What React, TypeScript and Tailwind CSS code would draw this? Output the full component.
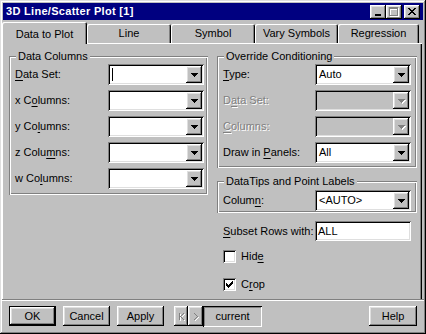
import React from "react";

const sunken =
  "shadow-[inset_1px_1px_0_#808080,inset_-1px_-1px_0_#fff,inset_2px_2px_0_#000,inset_-2px_-2px_0_#dfdfdf]";
const raised =
  "shadow-[inset_-1px_-1px_0_#000,inset_1px_1px_0_#fff,inset_-2px_-2px_0_#808080,inset_2px_2px_0_#dfdfdf]";
const etched =
  "shadow-[inset_1px_1px_0_#808080,inset_-1px_-1px_0_#fff,inset_2px_2px_0_#fff,inset_-2px_-2px_0_#808080]";
const defaultBtn =
  "shadow-[inset_0_0_0_1px_#000,inset_-2px_-2px_0_#000,inset_2px_2px_0_#fff,inset_-3px_-3px_0_#808080,inset_3px_3px_0_#dfdfdf]";
const disabledText = "text-[#808080] [text-shadow:1px_1px_0_#fff]";

function Pix({ rows, color }: { rows: string[]; color: string }) {
  const w = rows[0].length;
  const h = rows.length;
  const rects: React.ReactNode[] = [];
  rows.forEach((r, y) => {
    for (let x = 0; x < r.length; x++) {
      if (r[x] === "#") rects.push(<rect key={`${x}-${y}`} x={x} y={y} width={1} height={1} fill={color} />);
    }
  });
  return (
    <svg width={w} height={h} viewBox={`0 0 ${w} ${h}`} shapeRendering="crispEdges" className="block">
      {rects}
    </svg>
  );
}

function Glyph({ rows, disabled }: { rows: string[]; disabled?: boolean }) {
  if (!disabled) return <Pix rows={rows} color="#000" />;
  return (
    <div className="relative">
      <div className="absolute left-[1px] top-[1px]">
        <Pix rows={rows} color="#fff" />
      </div>
      <div className="relative">
        <Pix rows={rows} color="#808080" />
      </div>
    </div>
  );
}

const ARROW = ["#######", ".#####.", "..###..", "...#..."];
const CLOSE = ["##....##", ".##..##.", "..####..", "...##...", "..####..", ".##..##.", "##....##"];
const MIN = ["######", "######"];
const MAX = [
  "#########",
  "#########",
  "#.......#",
  "#.......#",
  "#.......#",
  "#.......#",
  "#.......#",
  "#.......#",
  "#########",
];
const CHECK = ["......#", ".....##", "#...###", "##.###.", "#####..", ".###...", "..#...."];
const FIRST = ["#...#", "#..#.", "#.#..", "##...", "#.#..", "#..#.", "#...#"];
const NEXT = ["#...", ".#..", "..#.", "...#", "..#.", ".#..", "#..."];

function L({ children }: { children: React.ReactNode }) {
  return <u className="underline decoration-1 underline-offset-[2px]">{children}</u>;
}

function Combo({ value, disabled, cursor }: { value?: string; disabled?: boolean; cursor?: boolean }) {
  return (
    <div className={`w-[96px] h-[21px] p-[2px] flex ${sunken} ${disabled ? "bg-[#c0c0c0]" : "bg-white"}`}>
      <div className="flex-1 flex items-center pl-[2px] leading-none">
        {cursor && <div className="w-px h-[13px] bg-black" />}
        {value}
      </div>
      <div className={`w-[16px] h-[17px] bg-[#c0c0c0] flex items-center justify-center ${raised}`}>
        <Glyph rows={ARROW} disabled={disabled} />
      </div>
    </div>
  );
}

function Row({
  label,
  disabled,
  value,
  cursor,
  comboDisabled,
}: {
  label: React.ReactNode;
  disabled?: boolean;
  value?: string;
  cursor?: boolean;
  comboDisabled?: boolean;
}) {
  return (
    <div className="flex items-center h-[21px]">
      <span className={disabled ? disabledText : ""}>{label}</span>
      <div className="ml-auto">
        <Combo value={value} cursor={cursor} disabled={comboDisabled} />
      </div>
    </div>
  );
}

function Group({
  title,
  className,
  children,
}: {
  title: string;
  className: string;
  children: React.ReactNode;
}) {
  return (
    <div className={`relative ${etched} ${className}`}>
      <span className="absolute left-[7px] top-[-6px] px-[2px] bg-[#c0c0c0] leading-[13px] whitespace-nowrap">
        {title}
      </span>
      {children}
    </div>
  );
}

function Check({ checked, label }: { checked?: boolean; label: React.ReactNode }) {
  return (
    <div className="flex items-center h-[13px] pl-[6px]">
      <div className={`w-[13px] h-[13px] bg-white flex items-center justify-center ${sunken}`}>
        {checked && <Pix rows={CHECK} color="#000" />}
      </div>
      <span className="ml-[5px]">{label}</span>
    </div>
  );
}

function CapBtn({ children, className = "" }: { children: React.ReactNode; className?: string }) {
  return (
    <div className={`w-[16px] h-[14px] bg-[#c0c0c0] flex ${raised} ${className}`}>{children}</div>
  );
}

function Btn({ children, w = 47, isDefault }: { children: React.ReactNode; w?: number; isDefault?: boolean }) {
  return (
    <div
      className={`h-[20px] bg-[#c0c0c0] flex items-center justify-center ${isDefault ? defaultBtn : raised} ${
        w === 48 ? "w-[48px]" : "w-[47px]"
      }`}
    >
      {children}
    </div>
  );
}

export default function App() {
  const tabs: [string, string][] = [
    ["Data to Plot", "w-[85px] h-[22px] pt-[2px]"],
    ["Line", "w-[84px] h-[19px] mt-[2px]"],
    ["Symbol", "w-[84px] h-[19px] mt-[2px]"],
    ["Vary Symbols", "w-[83px] h-[19px] mt-[2px]"],
    ["Regression", "w-[81px] h-[19px] mt-[2px]"],
  ];
  return (
    <div
      className={`w-[426px] h-[334px] bg-[#c0c0c0] p-[2px] flex flex-col text-[11px] text-black font-['Liberation_Sans',Arial,sans-serif] shadow-[inset_-1px_-1px_0_#000,inset_1px_1px_0_#dfdfdf,inset_-2px_-2px_0_#808080,inset_2px_2px_0_#fff]`}
    >
      {/* Title bar */}
      <div className="mx-[1px] mt-[1px] h-[17px] bg-[#000080] flex items-center pl-[3px] pr-[3px]">
        <span className="text-white font-bold leading-none whitespace-nowrap tracking-[0.3px]">
          3D Line/Scatter Plot [1]
        </span>
        <div className="ml-auto flex items-center">
          <CapBtn className="items-end pl-[5px] pb-[3px]">
            <Pix rows={MIN} color="#000" />
          </CapBtn>
          <CapBtn className="items-start pl-[3px] pt-[2px]">
            <Glyph rows={MAX} disabled />
          </CapBtn>
          <CapBtn className="ml-[2px] items-center justify-center">
            <Pix rows={CLOSE} color="#000" />
          </CapBtn>
        </div>
      </div>

      {/* Tabs */}
      <div className="mt-[2px] h-[21px] flex items-start relative z-10">
        {tabs.map(([t, cls]) => (
          <div
            key={t}
            className={`${cls} bg-[#c0c0c0] flex items-center justify-center rounded-t-[2px] shadow-[inset_1px_1px_0_#fff,inset_-1px_0_0_#000,inset_-2px_0_0_#808080]`}
          >
            {t}
          </div>
        ))}
      </div>

      {/* Panel */}
      <div className="h-[256px] w-[420px] flex pt-[13px] pl-[7px] gap-[9px] shadow-[inset_1px_1px_0_#fff,inset_-1px_0_0_#000,inset_-2px_0_0_#808080]">
        <div className="w-[199px]">
          <Group title="Data Columns" className="w-[199px] h-[139px] pt-[8px] pl-[6px] pr-[4px] flex flex-col gap-[5px]">
            <Row label={<><L>D</L>ata Set:</>} cursor />
            <Row label={<>x C<L>o</L>lumns:</>} />
            <Row label={<>y Co<L>l</L>umns:</>} />
            <Row label={<>z Colu<L>m</L>ns:</>} />
            <Row label={<>w Co<L>l</L>umns:</>} />
          </Group>
        </div>
        <div className="w-[200px] flex flex-col">
          <Group title="Override Conditioning" className="h-[112px] pt-[8px] pl-[6px] pr-[6px] flex flex-col gap-[5px]">
            <Row label={<><L>T</L>ype:</>} value="Auto" />
            <Row label={<>D<L>a</L>ta Set:</>} disabled comboDisabled />
            <Row label={<><L>C</L>olumns:</>} disabled comboDisabled />
            <Row label={<>Draw in <L>P</L>anels:</>} value="All" />
          </Group>
          <Group title="DataTips and Point Labels" className="mt-[13px] h-[32px] pt-[9px] pl-[6px] pr-[6px]">
            <Row label={<>Colum<L>n</L>:</>} value="<AUTO>" />
          </Group>
          <div className="mt-[8px] h-[20px] flex items-center pl-[6px] pr-[6px]">
            <span>
              <L>S</L>ubset Rows with:
            </span>
            <div className={`ml-auto w-[96px] h-[20px] bg-white flex items-center pl-[3px] ${sunken}`}>ALL</div>
          </div>
          <div className="mt-[9px]">
            <Check label={<>Hid<L>e</L></>} />
          </div>
          <div className="mt-[15px]">
            <Check checked label={<>C<L>r</L>op</>} />
          </div>
        </div>
      </div>

      {/* Separator */}
      <div className="h-[2px] border-t border-b border-t-[#808080] border-b-white" />

      {/* Buttons */}
      <div className="mt-[5px] h-[20px] flex items-center pl-[7px] pr-[7px]">
        <Btn isDefault>OK</Btn>
        <div className="ml-[7px]">
          <Btn>Cancel</Btn>
        </div>
        <div className="ml-[7px]">
          <Btn>Apply</Btn>
        </div>
        <div className={`ml-[10px] w-[14px] h-[20px] flex items-center justify-center ${raised}`}>
          <Glyph rows={FIRST} disabled />
        </div>
        <div className={`w-[15px] h-[20px] flex items-center justify-center ${raised}`}>
          <Glyph rows={NEXT} disabled />
        </div>
        <div
          className={`w-[59px] h-[21px] flex items-center justify-center shadow-[inset_1px_1px_0_#000,inset_-1px_-1px_0_#fff,inset_2px_2px_0_#808080]`}
        >
          current
        </div>
        <div className="ml-auto">
          <Btn w={48}>Help</Btn>
        </div>
      </div>
    </div>
  );
}
